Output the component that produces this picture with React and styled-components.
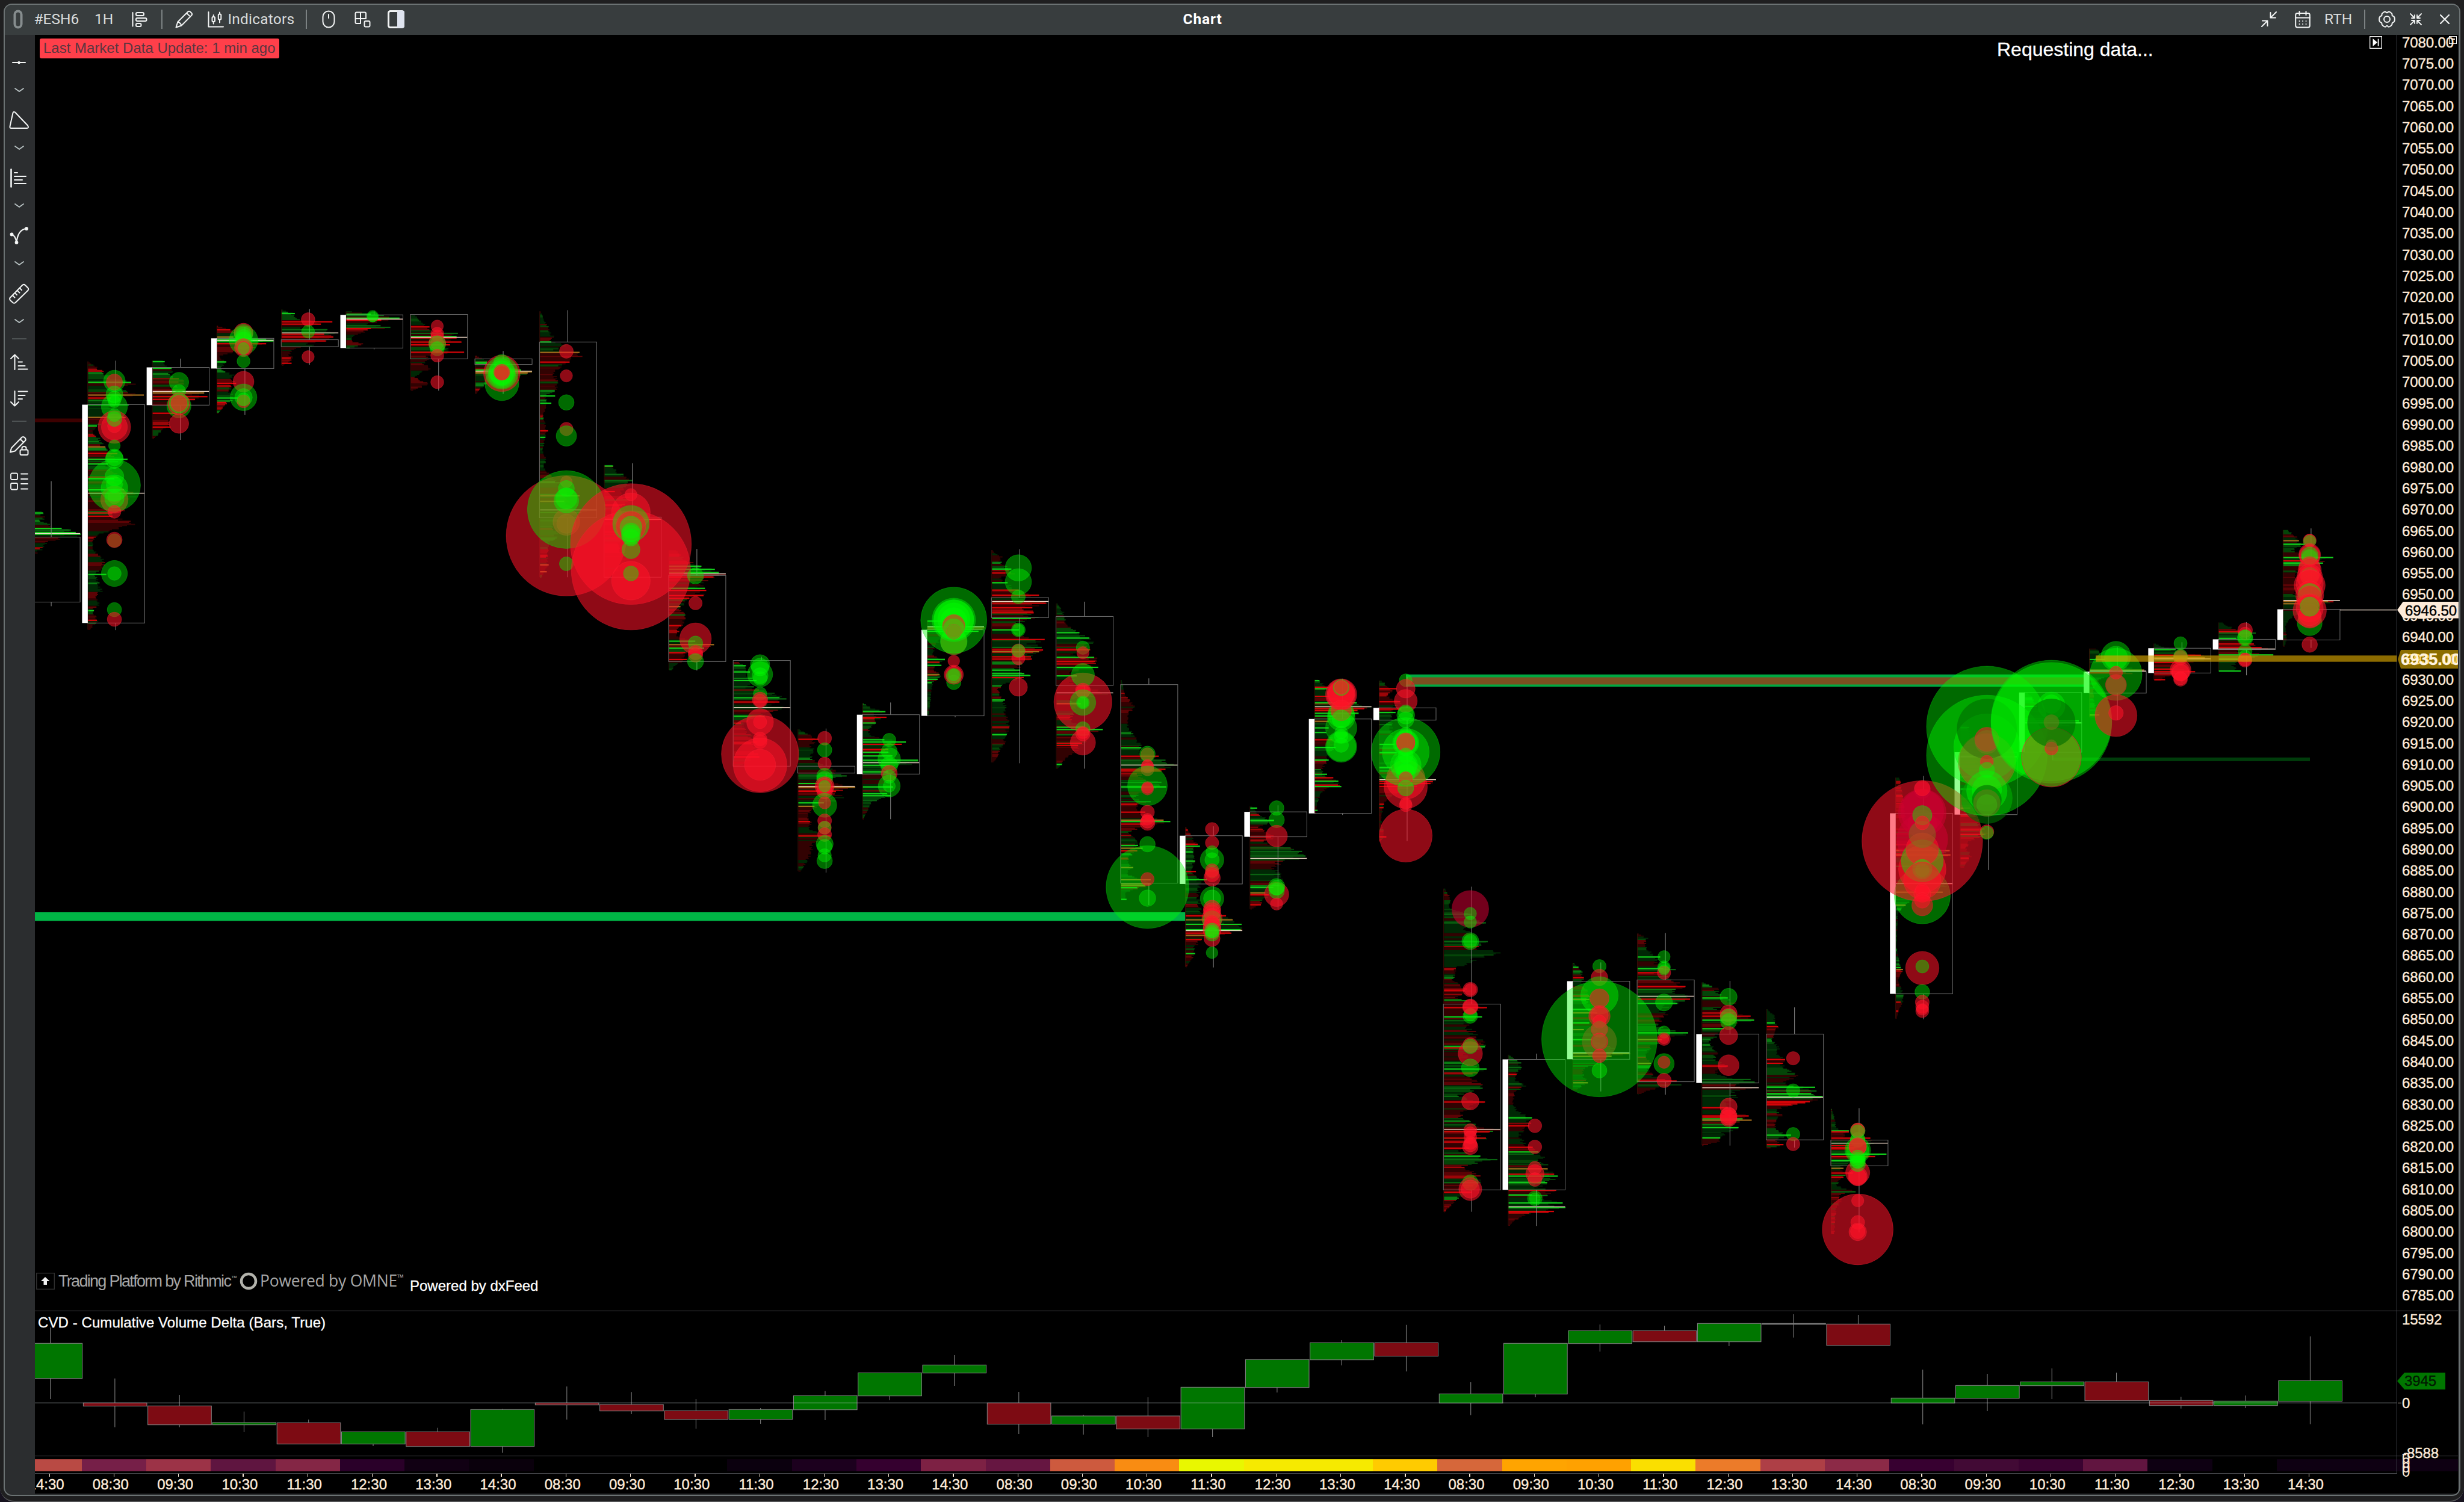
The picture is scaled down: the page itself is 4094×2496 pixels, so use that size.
import React from 'react';
import styled, { createGlobalStyle } from 'styled-components';

const GlobalStyle = createGlobalStyle`
    * { box-sizing: border-box; }
    body {
        margin: 0;
        background: #17131f;
        font-family: "Liberation Sans", Arial, sans-serif;
        overflow: hidden;
    }
    svg { display: block; flex: none; }
`;

const PITCH = 107.28;
const FIRST = 81.6;
const tickX = i => FIRST + i * PITCH;

const hours = ['08:30', '09:30', '10:30', '11:30', '12:30', '13:30', '14:30'];
const times = ['14:30', ...hours, ...hours, ...hours, ...hours, ...hours];
const prices = Array.from({ length: 60 }, (_, i) => (7080 - i * 5).toFixed(2));

// Footprint bars, packed per zone: page y = top + y / sy, page width = w / sx.
// Every token is <y><kind><size>. Lower case g/r/m in `p` is the profile outline,
// `l` holds the bright levels, `c` the large trade bubbles (size = radius).
const ZONES = [
  { top: 480, sy: 2.613, sx: 1.845, bars: [
    { i: 0, wick: [835, 1378], box: [1078, 1360], poc: 1062,
      p: '965g55 980g70 1005g62 1015g90 1025r75 1035r85 1045g150 1060g175 1070g165 1078r120 1095r95 1120r75 1130g60 1150g40',
      l: '973G60 1040G117 1047d145 1058G160 1065G175', c: '' },
    { i: 1, wick: [312, 1482], box: [503, 1451], white: true, poc: 887,
      p: '315g2 350m40 365g55 385g80 405m140 412r150 430m90 460m165 470r70 500g90 530g80 555m115 580r60 595g25 625r15 650g40 685m50 700r60 720r90 740g110 760g60 780m90 820m100 870g120 887r165 905r140 930r100 960r110 985r80 1000r120 1015r150 1040r100 1060g40 1080r20 1120g15 1150g30 1170g45 1190r60 1215r40 1240g25 1280g35 1310g45 1330r30 1365g40 1390r15 1440r30 1480r5',
      l: '406G132 461O171 474R70 503G125 558O115 595G27 686O53 715R90 740G121 760G60 824G80 872G110 973R75 987R75 1240G56 1397G18 1439R27',
      c: '400g33 405r25 458g26 475g22 489g19 512g40 600r50 600r40 595r21 548g20 565g23 681g18 740g28 732g26 915r42 905r20 853g80 815g29 850g25 865g41 910g30 968r20 1093g21 1090r24 1236g40 1236g21 1393g22 1435r22' },
    { i: 2, wick: [303, 656], box: [341, 505], white: true, poc: 445,
      p: '310g35 345g55 380g70 400m110 430r70 445r170 455r155 470r165 480r130 500r120 540r90 570r50 600r50 620g25 650r3',
      l: '316G37 345G58 452O158 468R168 480R130 540R75 600R55',
      c: '405g30 445g21 508g37 500r34 497g30 497r25 585r30' },
    { i: 3, wick: [165, 548], box: [215, 346], white: true, poc: 223,
      p: '160r3 178r60 205g60 215g150 223g173 240r150 260r100 290r5 317g30 345g10 370g50 400r55 440g40 460m50 475g60 495r30 540g3',
      l: '178R40 209O50 218G150 226G173 238R150 317G28 410R58 474G63 493R28',
      c: '223g44 190r29 195g29 200g25 210g24 225g27 247g26 255r28 258r22 258g18 314g20 403r32 471g41 471g27 488r20 480g20' },
    { i: 4, wick: [88, 330], box: [221, 251], poc: 191,
      p: '90g5 105g35 125g45 135r80 142r155 155r120 168g60 178g140 191g173 205r160 213r150 226r135 235g60 245g110 255r50 280r25 300r35 330r5',
      l: '107G40 143R155 153R120 177d140 197R130 209R158 226R135 300R28 323R30',
      c: '133r21 186g20 295r19' },
    { i: 5, wick: [95, 263], box: [113, 257], white: true, poc: 131,
      p: '98g20 108g80 115g115 125g160 131g173 140r110 150g60 160g105 167g135 173r70 190r50 205g20 225g20 240g60 255g10',
      l: '110G75 115d115 127G163 136R107 160d105 167d135 172R75',
      c: '119g18 121g16' },
    { i: 6, wick: [200, 442], box: [111, 304], poc: 210,
      p: '115g15 145g40 165r55 185g60 195g144 208r160 215r140 230r150 240r120 260g110 275r163 290r60 320r45 345r60 380r10 410r60 440r5',
      l: '165R57 193d144 207G140 213R140 231R155 243R120 275R163',
      c: '162r19 195r20 205r19 236r26 236r20 240g26 260g22 290r20 405r20' },
    { i: 7, wick: [270, 456], box: [304, 328], poc: 357,
      p: '290r5 310m40 325g60 340r110 352g140 357m173 370r150 385m80 405g40 430r15 455r3',
      l: '318G35 323G35 352G140 360O173 365O160',
      c: '412g52 367r56 365g50 360g40 372g42 375g35 320g25 385g25 362r25 365r22' },
  ] },
  { top: 500, sy: 1.742, sx: 2.24, bars: [
    { i: 8, wick: [27, 800], box: [119, 628], poc: 605,
      p: '30g3 60g20 75r35 95g45 105r60 115g40 125r110 140g60 148r145 155r170 175r110 200r60 220r60 240r75 260g55 275r20 295g30 330r12 370r25 400g20 430g10 455g25 480g15 500r40 520g70 560m120 590g120 605g200 625g90 650g50 680g70 700g35 730r30 765r30 800r5',
      l: '119G42 149O147 177R110 275G56 296G42 376R30 395G20 564O147 580O90 764O32 784O25',
      c: '146r26 217r23 294g29 371r25 391g38 680r224 640r50 645r36 524r22 604g145 543g30 578g46 572g40 761g26' },
    { i: 9, wick: [470, 800], box: [626, 800], poc: 632,
      p: '475g30 500g60 525g110 550r60 580r110 600r60 632r200 650r90 700r60 750r90 790r40 800r5',
      l: '478G32 502d70 520d105 552R38 632O212',
      c: '704r225 780r222 561r23 612r72 645g68 652r55 655g41 670g35 677g36 685g32 720g34 810r72 789g28' },
    { i: 10, wick: [718, 1070], box: [795, 1044], poc: 790,
      p: '722r30 745r60 755r90 768g120 780g190 790g212 800r160 815r120 832m130 850r125 865r70 885r45 905r60 930r70 945r40 970r30 985g95 995m165 1005g120 1020r60 1040r65 1050g30 1068g8',
      l: '768G120 777G170 786G185 799R165 832G133 838R138 853R128 861R75 885O42 909d60 940R45 985G97 995O167 1005G130 1018R60 1038R66',
      c: '796g30 875r25 978r59 991g27 1018r27 1025r27 1044g30' },
    { i: 11, wick: [1030, 1190], box: [1041, 1347], poc: 1177,
      p: '1045r20 1056g45 1075g50 1100g80 1120g50 1135g170 1150g180 1160r160 1170g130 1177g212 1185r150 1200g90 1225r35 1240r50 1270r80 1300r100 1320r90 1345r20',
      l: '1056G45 1074G60 1099G85 1117d75 1149G170 1152d196 1161R170 1202G115 1222R27 1320R95',
      c: '1052g36 1081g47 1060g33 1085g30 1093g26 1137g25 1155r29 1157r24 1219r50 1219r25 1268r26 1276r26 1312r144 1343r100 1343r58' },
    { i: 12, wick: [1238, 1655], box: [1347, 1367], poc: 1405,
      p: '1240g5 1268r75 1285g50 1300g60 1330r60 1345g100 1365g180 1380g160 1390r90 1405r212 1420r140 1440r170 1455g90 1470r60 1490r35 1510r50 1530g50 1550r110 1570r60 1600r50 1650g10',
      l: '1269R75 1375d180 1397G90 1408O212 1420R140 1453G95 1463O60 1507R44 1549R120',
      c: '1266r26 1300g27 1340r25 1376g30 1385g30 1405r36 1405r30 1418r30 1405g22 1460g45 1453r23 1505r26 1525r25 1525g24 1545r26 1572g32 1580g28 1621g29 1605g25' },
  ] },
  { top: 880, sy: 2.119, sx: 2.24, bars: [
    { i: 13, wick: [609, 1020], box: [652, 861], white: true, poc: 821,
      p: '612g3 628g40 640g85 650r25 662r85 668r45 680g48 700g25 715g25 730g50 745g150 757r140 765g65 775r95 785g110 800g90 812g200 821r212 835g130 855g110 870r130 885r80 905g115 925g85 937g105 950g50 970r30 1000g10 1020r3',
      l: '641G84 661R88 666R44 681G48 740G80 748G160 756R145 774R95 784G95 797G110 812G205 830G100 853G95 906G112 930G90 937G104 954d52',
      c: '741g25 781g30 808g42 830g32 858r30 903g41 903g23 870g25' },
    { i: 14, wick: [340, 661], box: [353, 656], white: true, poc: 342,
      p: '320g60 342g212 350m200 360g160 380m60 410g30 440g20 460g70 475g40 490r25 510m50 525g40 540g20 580g15 650g5',
      l: '322G80 346O212 351O205 358G190 457G65 467R45 478G52 511O45 527G38 539G16',
      c: '395r49 319g123 393g50 318g81 318g75 315g60 322g50 318g74 339r42 352g40 360r28 360g27 463r22 538g27 511r36 511r31 515g28 512g22' },
    { i: 15, wick: [69, 823], box: [240, 310], poc: 253,
      p: '72g3 85g15 95r40 110r30 138g70 152r90 170r30 188g60 213r100 230r170 245g120 253g212 262r200 275r150 293r155 310r170 318g130 335r110 355g90 375r140 388r195 400g160 425r190 440g160 455r150 475r100 495g105 512g145 525r110 540g60 560r25 580g30 610g50 650m60 690m65 722g55 750r50 770g35 800r20 820r3',
      l: '139G72 153R50 187G58 213R100 231R175 259R200 275R150 293R155 313G145 353G100 387R196 415d185 424R190 430O175 448R145 456R148 495G105 507G120 514G143 521R118 600G48 722G55',
      c: '135g49 184g49 237g26 353g26 353g22 453r25 427r26 427g24 555r34' },
    { i: 16, wick: [254, 842], box: [306, 549], poc: 575,
      p: '260g5 300g35 335r40 360g80 382g122 400r140 423g110 440r60 450g150 464r143 485g150 500r60 515g70 540r60 560r150 575r212 595r60 615r90 640m70 680m60 704g170 720g120 735r120 752r100 775r80 800r40 830g15 842r3',
      l: '363G85 382G122 423R125 450G140 464R143 485G155 515G75 613O90 696G105 704G172 722d120 752R95 760R80 827G20',
      c: '607r108 416g25 434r23 512g43 567r28 570r25 609g48 609g24 609g20 702g27 719r27 716r22 750r47' },
    { i: 17, wick: [524, 1322], box: [546, 1245], poc: 829,
      p: '530g3 580r15 620r55 645r30 680g25 700g30 720g50 740g80 768g75 785g80 800r140 815g200 829g212 845r165 860r70 890g150 906g168 918r100 940g60 960r90 980r60 1000r90 1028g180 1040r90 1065r30 1090g60 1112g65 1130r60 1160g25 1190g45 1210g20 1235m100 1255m100 1275g20 1300g15',
      l: '768G75 798R140 812d165 844R165 850R150 890d150 906G168 958d110 967R60 995R90 1023O158 1028G183 1037R90 1112G63 1122O80 1131R60 1190O45 1233O110 1248O110 1254O90 1261G60 1302G20',
      c: '1259g154 792r25 790g29 835r24 830r22 845r24 902g74 913r23 908r22 995r26 1020r22 1033r28 1028r25 1108g29 1231r25 1298g31' },
    { i: 18, wick: [1045, 1542], box: [1078, 1248], white: true, poc: 1412,
      p: '1048r3 1065r15 1090g30 1108r45 1130g30 1165g35 1200g20 1240g60 1280g50 1302g55 1325g55 1345g60 1360r160 1375m180 1390g208 1412m210 1425r160 1440g60 1460r45 1480r30 1500r30 1525g15 1540r3',
      l: '1058R8 1108R45 1115G53 1135G28 1167G35 1204R38 1233G80 1360R150 1374O175 1390G208 1409G205 1421R170 1429O100 1443R60 1493G35',
      c: '1055r25 1103r25 1135g23 1163g44 1163g27 1205g24 1200r25 1215r27 1227r31 1299g44 1299g32 1335r32 1345r33 1350r30 1370r38 1375g35 1365r30 1385r28 1395r33 1410r34 1440r30 1412g28 1425g26 1415g24 1490g22' },
  ] },
  { top: 1080, sy: 1.568, sx: 2.613, bars: [
    { i: 19, wick: [405, 675], box: [422, 487], white: true, poc: 543,
      p: '408g10 425g35 444g105 460r40 487r110 500r60 515g170 530g235 543g247 550r150 565g120 590g140 605g145 620g100 638m90 650r60 664r45 675r3',
      l: '412G30 444G103 487R90 516d175 525d225 537d240 585d130 619G100 633O65 638R80 664R46',
      c: '412g32 443g34 485r47 637r53 617g36 620g33 628g34 662r27' },
    { i: 20, wick: [75, 430], box: [180, 426], white: true, poc: 148,
      p: '78g15 88g40 97r55 103g60 120r65 137g180 148g247 155r200 165g180 180r90 195g60 215g60 235r90 254g90 275g60 292r60 305g35 325g40 333r80 342g100 352r110 360r60 375g25 400g10 425r5',
      l: '80G20 97R60 101G55 121R65 138G182 153R215 158R185 165G190 172G90 186O60 203G60 215G50 234R75 254G90 287G60 324G53 333R80 342G102 352R100 356G115 418G12',
      c: '203g68 252g68 252g64 248g32 225g30 215g28 168g58 175g60 116r68 118r62 112r60 115r55 98g35 97r30 158r45 180g40' },
    { i: 21, wick: [70, 498], box: [151, 183], white: true, poc: 338,
      p: '80g10 101r60 120r40 135r100 150r60 165g60 190g55 215g60 245g80 268g90 290g60 310g50 330g160 338g247 345r235 360r120 380r60 400r20 440r8 487r25 498r3',
      l: '101R75 135R90 154R95 163G70 246G65 268G75 306G55 343R232 348R222 356R100 402R20 411R18 487R30',
      c: '79g28 101r41 133r50 163g33 170g39 182g35 357r94 338r85 266g149 266g102 242g57 242g52 217g27 243r40 240g36 240r40 275g33 300g67 300g52 303g48 320g42 335r30 360g35 405r28 400r26 484r115' },
    { i: 22, wick: [617, 1464], box: [923, 1407], poc: 1249,
      p: '622g5 645r30 670g25 689g120 711g180 725g90 745r140 760g190 775r150 788g243 800g170 815g120 828r50 845g50 860r40 888r120 905r60 923r150 932r187 945r90 956g165 970g110 990g130 1020r175 1034g178 1045r120 1070g90 1092g180 1110g120 1125r160 1142g168 1160g60 1178r180 1200g90 1215g80 1230g120 1249r247 1257r180 1272r180 1290r110 1305g80 1320g160 1328g235 1335g160 1345r80 1370r165 1385g165 1400r110 1413r120 1430r60 1464r3',
      l: '689d120 711d182 760d190 888R90 932R187 956G165 1034G178 1037R100 1092G185 1142d168 1178R178 1255R200 1272R182 1282R110 1298R110 1319G158 1328d232 1388d150 1413R120',
      c: '675m81 687g27 709g27 759g37 759g30 885r32 885r26 954g32 950g28 930r34 930r31 1052r53 1030r33 1033g32 1089g39 1176r38 1252r29 1258r26 1270r28 1285r28 1295r34 1290r30 1388g34 1405r50 1405r40' },
    { i: 23, wick: [1052, 1501], box: [1067, 1407], white: true, poc: 1451,
      p: '1055g5 1075g55 1088g55 1105r35 1120g30 1135g80 1150r30 1180r20 1200g40 1219g100 1240r95 1260g50 1280g70 1296r100 1308g140 1320g155 1335g170 1352m170 1362g195 1372g213 1388g170 1400g140 1408r205 1425g150 1440g230 1451g247 1463r198 1470r80 1485r30 1500r3',
      l: '1076d55 1088d57 1106R35 1131d57 1219G102 1240R90 1296R105 1308G130 1352O170 1366R198 1371G214 1388G168 1408R207 1420G100 1441G235 1453G247 1463R197 1467R90',
      c: '1240r30 1295r30 1365r40 1350r29 1380r30 1429g32 1429g24' },
  ] },
  { top: 1480, sy: 2.412, sx: 2.24, bars: [
    { i: 24, wick: [288, 805], box: [363, 676], white: true, poc: 650,
      p: '290g5 307g18 325g35 345r40 365g40 400g60 450g60 490g100 520m80 560g90 600g100 630g160 650m205 665m140 690m110 710g50 740g40 765m55 800m15',
      l: '307G20 349R40 436O60 476G80 490O90 530G60 557O40 597G70 653O212 664O143 770O55',
      c: '303g25 348r31 595g215 420g70 432r36 605e65 503r40 500r33 525r25 555r31 555e30 605r32 605e28 662r26 721g28' },
    { i: 25, wick: [170, 818], box: [358, 766], poc: 423,
      p: '172g5 190g40 205r30 235g40 266g85 290r70 315g140 330r80 350g140 368r195 385r178 400g130 415g190 423g212 435r195 452g148 470g100 500r110 520r85 545g90 570g188 582r165 598r105 620g60 645g40 670g40 692m55 710g40 740r60 763r145 775g165 785r100 800r40 815r3',
      l: '266G84 313G95 316d142 329R80 384R178 435R195 452G148 570G188 597O90 692O50 763R145',
      c: '265g23 307g24 310g22 329r25 318g20 448g32 567g23 595r24 595r18 694g38 688r23 761r27' },
    { i: 26, wick: [362, 1022], box: [575, 771], white: true, poc: 790,
      p: '368g5 390r60 410g60 430g95 450r130 470g50 503r180 519g193 535r100 555g80 580r60 600g30 620g40 645g60 675g50 703r95 720r60 740g70 757g180 770g195 780r110 790g212 800g130 820g140 850g100 870r95 885g130 903r173 920r184 935g110 950g135 970g90 990g68 1005r65 1020r3',
      l: '430G95 503R180 519G193 553G80 703R95 757d180 767d195 870R95 903R173 908R120 915G150 920O184 950G135 991G67',
      c: '426g32 492r32 505r31 508g31 525g30 581r34 700r39 866r32 900r30 913r31 905r32' },
    { i: 27, wick: [468, 1030], box: [575, 999], poc: 828,
      p: '475g3 500g30 530g30 545r45 575r30 600g20 625g50 650g40 677r68 692r60 715g90 740g115 755r95 775g70 788g180 805g185 815g165 828g212 840r170 850r140 862r80 880g35 900r60 930r30 960g40 980g90 990g45 1005r40 1018r65 1030r10',
      l: '530G30 545R42 677R68 692R60 788G180 803d185 814G165 825G208 846R160 850R143 858R90 980G90 1018R62',
      c: '672r25 801g25 976g25 1016r25' },
    { i: 28, wick: [872, 1370], box: [1000, 1103], poc: 1012,
      p: '875g2 920g15 950g20 965m60 985r50 993r120 1012g205 1022r110 1040g90 1056g200 1066r160 1080g90 1100g50 1115g30 1132r80 1150r35 1180g20 1205g95 1215r40 1250r35 1270r20 1320r15 1375r12',
      l: '963G65 967R65 992R145 1022R80 1030R90 1035R85 1056G205 1066R163 1083G75 1113O45 1132R80 1149R45 1207d90',
      c: '998g27 1000g28 962g28 962r27 958r25 965g25 1130r45 1145r36 1148r32 1040g48 1042g42 1025r33 1028r32 1070g28 1080g29 1095g29 1085g27 1358r132 1243r23 1330r26 1368r33 1366r27' },
  ] },
  { top: 860, sy: 1.823, sx: 1.546, bars: [
    { i: 29, wick: [783, 1520], box: [896, 1443], white: true, poc: 1109,
      p: '788g8 810r15 850r20 900r25 930r30 960r80 990r60 1010m120 1022m130 1050m60 1080r60 1109m140 1135m110 1150m60 1175g25 1200g5 1300g2 1362g12 1375r18 1400r5 1440g20 1455g20 1475r15 1500r5 1518r2',
      l: '1009O138 1022O140 1135O120 1174O25 1363G12 1369O18 1468R12 1495R6',
      c: '1146g72 980r155 975m66 895m62 890m56 826m22 820r20 930m38 1065r61 1040g54 1005r42 960e35 902g25 925r18 1065g25 1068g18 1100r48 1140r22 1130r18 1160r20 1175r27 1365r43 1360g17 1437g19 1468r18 1482r17 1495r17 1490r15' },
    { i: 30, wick: [711, 1068], box: [711, 900], white: true, poc: 725,
      p: '630g20 660g30 700g40 760g50 790m40 820g50 860m60 890r45 915r50 935r55 955r70 980r25 1000r15 1020r30 1060r10',
      l: '636G22 880O25 960R60',
      c: '850d66 633g155 740r74 721g155 695g85 640d77 738e71 672r31 680e31 740r17 765g20 828g52 825g38 855d38 870g26 865e35 952r18 955g17' },
    { i: 31, wick: [530, 735], box: [530, 711], white: true, poc: 622,
      p: '532g10 560g30 572g35 600g60 622g120 640g90 690g20',
      l: '572G30 616G138 622G146',
      c: '622g155 615g155 726r77 726g75 565g24 570g35 622d62 620e20 700r17 690e15' },
    { i: 32, wick: [393, 614], box: [467, 532], white: true, poc: 465,
      p: '397g20 410g30 430g60 450m90 465m146 475g80 490g25 520r10 560g12 590m25 605m20',
      l: '430G40 462O140 470R50 598O25',
      c: '420g38 475g67 425g30 600r54 592r19 507r27 507e26 470r17' },
    { i: 33, wick: [378, 500], box: [396, 471], white: true, poc: 428,
      p: '382g5 400g50 416r120 428m146 440r80 455g70 468r105 480r30 492r20',
      l: '400G55 417R120 425O130 439R60 459R50 467R105 491R28',
      c: '381g17 425r18 420r17 420g18 462r27 466r24 470r22 490r18 487r17' },
    { i: 34, wick: [317, 478], box: [369, 400], white: true, poc: 398,
      p: '318g10 345r60 355g55 366g80 375r70 390r100 398r146 405r50 415g135 425g70 445g40 465g55',
      l: '346R55 350d95 366G45 383R90 394R110 416G140 429G50 465G57',
      c: '341r19 352r17 362g19 365g20 405g18 420g16 432r18 430r17' },
    { i: 35, wick: [33, 395], box: [278, 371], white: true, poc: 251,
      p: '38g15 55g35 71m40 82g60 100g20 121g125 138g100 150m50 175r30 190r40 215r40 235m30 251r140 257m115 275m50 290g45 310g15 330g5 365g10 390r3',
      l: '70O40 81G55 121G128 131R90 138G102 254O115 261O60',
      c: '320g32 70r17 68r15 72g16 112r28 115r27 115g22 120g20 150r27 160r30 175r25 178g23 180r33 205r40 200r35 235r36 225r28 235g30 245r32 282r43 275r35 300r30 295r28 268r22 270g25 385r20' },
  ] },
];

const parse = text => [...text.matchAll(/(\d+)([a-zA-Z])(\d+)/g)].map(m => [Number(m[1]), m[2], Number(m[3])]);

const SHADES = {
  g: ['#002805', '#044508', '#0a7a12'],
  r: ['#320202', '#5c0305', '#9c0508'],
};
const BRIGHT = { G: '#12cc1c', R: '#d60408', O: '#a06c1c', d: '#0a6412' };
const BUBBLES = {
  g: 'rgba(0,252,0,0.42)',
  r: 'rgba(255,18,40,0.56)',
  m: 'rgba(205,0,50,0.56)',
  d: 'rgba(0,110,0,0.62)',
  e: 'rgba(120,120,25,0.5)',
};

const random = seed => {
  let s = seed * 7919 + 17;
  return () => {
    s = (s * 1103515245 + 12345) % 2147483648;
    return s / 2147483648;
  };
};

const bar = (x, y, w, h) => `M${x.toFixed(1)} ${y.toFixed(1)}h${w.toFixed(1)}v${h}h${(-w).toFixed(1)}z`;

// Walks the outline one price level at a time and sorts the rows by shade.
const buildProfile = (item, zone) => {
  const pts = parse(item.p);
  const rnd = random(item.i + 3);
  const x = tickX(item.i) - 42.5;
  const paths = {};
  let run = 0;
  let tone = 'g';
  let level = 0;
  const step = 1.765 * zone.sy;
  let k = 0;
  for (let y = pts[0][0]; y < pts[pts.length - 1][0]; y += step) {
    while (k < pts.length - 2 && pts[k + 1][0] <= y) k += 1;
    const [y0, c0, w0] = pts[k];
    const [y1, c1, w1] = pts[k + 1];
    const t = (y - y0) / (y1 - y0);
    if (run <= 0) {
      const near = t < 0.5 ? c0 : c1;
      const bias = near === 'g' ? 0.83 : near === 'r' ? 0.15 : 0.5;
      tone = rnd() < bias ? 'g' : 'r';
      const l = rnd();
      level = l < 0.66 ? 0 : l < 0.94 ? 1 : 2;
      run = 1 + Math.floor(rnd() * 2.4);
    }
    run -= 1;
    const w = (w0 + (w1 - w0) * t) * (0.72 + rnd() * 0.33) / zone.sx;
    const fill = SHADES[tone][level];
    paths[fill] = (paths[fill] || '') + bar(x, zone.top + y / zone.sy, Math.min(Math.max(w, 1), 94), 1.8);
  }
  return paths;
};

const Footprint = ({ item, zone }) => {
  const x = tickX(item.i);
  const py = v => zone.top + v / zone.sy;
  const paths = buildProfile(item, zone);
  const [boxTop, boxBottom] = item.box.map(py);
  const [wickTop, wickBottom] = item.wick.map(py);
  const ends = parse(item.p);
  return (
    <g>
      <rect x={x - 43.5} y={py(ends[0][0])} width="1" height={(ends[ends.length - 1][0] - ends[0][0]) / zone.sy} fill="#3c1008" />
      {Object.keys(paths).map(fill => <path key={fill} d={paths[fill]} fill={fill} />)}
      {parse(item.l).map(([y, kind, w], n) => (
        <rect key={n} x={x - 42.5} y={py(y) - 1} width={w / zone.sx} height="2.2" fill={BRIGHT[kind]} />
      ))}
      <rect x={x - 42.5} y={py(item.poc) - 0.6} width="94" height="1.4" fill="#f3dccb" />
      <path d={`M${x + 3.5} ${wickTop}V${Math.max(boxTop, wickTop)}M${x + 3.5} ${boxBottom}V${Math.max(wickBottom, boxBottom)}`} stroke="#8c8c8c" strokeWidth="1" />
      <rect x={x - 43.5} y={boxTop} width="95" height={boxBottom - boxTop} fill="none" stroke="#6f6f6f" strokeWidth="1" />
      {item.white && <rect x={x - 52.5} y={boxTop} width="9.4" height={boxBottom - boxTop} fill="#fff" />}
    </g>
  );
};

const Bubbles = ({ item, zone }) => (
  <g>
    {parse(item.c).map(([y, kind, r], n) => (
      <circle key={n} cx={tickX(item.i) + 1.2} cy={zone.top + y / zone.sy} r={r / zone.sx}
        fill={BUBBLES[kind]} stroke={kind === 'g' ? 'rgba(0,235,20,0.3)' : kind === 'r' ? 'rgba(255,40,60,0.3)' : 'none'} strokeWidth="1" />
    ))}
  </g>
);

const each = render => ZONES.flatMap(zone => zone.bars.map(item => render(item, zone)));

const PriceChart = () => (
  <svg width="3924" height="2120" viewBox="58 58 3924 2120">
    <rect x="58" y="695.5" width="79" height="6" fill="#3d0000" />
    <rect x="58" y="1516" width="1912" height="14.3" fill="#00b445" />
    <rect x="2336" y="1120.8" width="1136" height="20.4" fill="#00a843" />
    <rect x="2336" y="1125.5" width="1136" height="12" fill="#7a4f20" />
    <rect x="3410" y="1258.8" width="428" height="6" fill="#003c0b" />
    {each((item, zone) => <Footprint key={item.i} item={item} zone={zone} />)}
    {each((item, zone) => <Bubbles key={item.i} item={item} zone={zone} />)}
    <rect x="3482" y="1089.3" width="500" height="10.4" fill="rgba(215,165,0,0.65)" />
    <rect x="3888" y="1013" width="94" height="1.3" fill="#fdebd9" />
  </svg>
);

// [upper edge, lower edge, wick top, wick bottom, direction]
const cvd = [
  [2232.3, 2290.7, 2206, 2325, 1], [2331.3, 2336.7, 2290.7, 2371.7, -1], [2336.3, 2367.7, 2318, 2371.7, -1],
  [2364, 2367.7, 2345.7, 2380, 1], [2364.3, 2399.7, 2359, 2400, -1], [2379.3, 2399.7, 2379, 2403, 1],
  [2379.3, 2403.7, 2372.7, 2404, -1], [2342.3, 2403.7, 2341, 2414, 1], [2331.3, 2334.7, 2304, 2359, -1],
  [2334, 2344.7, 2313.3, 2350, -1], [2344.3, 2358.7, 2325, 2374.3, -1], [2342.3, 2358.7, 2340, 2366, 1],
  [2319.3, 2342.7, 2311.7, 2360, 1], [2281.3, 2319.7, 2281, 2326.7, 1], [2268.3, 2281.7, 2252, 2303, 1],
  [2331.3, 2366.7, 2313, 2383, -1], [2353, 2366.7, 2351, 2384, 1], [2353, 2374.7, 2322, 2388, -1],
  [2305.3, 2374.7, 2305, 2388, 1], [2259.3, 2305.7, 2259, 2314, 1], [2231.3, 2259.7, 2227, 2269, 1],
  [2231.3, 2253.7, 2201.7, 2279, -1], [2316.3, 2331.7, 2297, 2351.7, 1], [2232.3, 2316.7, 2232, 2322, 1],
  [2211.3, 2232.7, 2201, 2246, 1], [2211.3, 2229.7, 2203, 2230, -1], [2199.3, 2229.7, 2199, 2237, 1],
  [2199.3, 2200.7, 2184, 2222.7, 0], [2200.3, 2235.7, 2185, 2236, -1], [2323.3, 2331.7, 2276, 2367, 1],
  [2302.3, 2323.7, 2283, 2345, 1], [2296.3, 2302.7, 2274, 2325, 1], [2296.3, 2327.7, 2281, 2328, -1],
  [2327.3, 2335.7, 2321, 2340.7, -1], [2328.3, 2335.7, 2319, 2340, 1], [2294.3, 2328.7, 2220.7, 2366.7, 1],
];
const cvdFill = { '1': '#007600', '-1': '#7d0b13', '0': '#888' };

const CvdChart = () => (
  <svg width="3924" height="240" viewBox="58 2179 3924 240">
    {cvd.map(([a, b, top, bottom, dir], i) => (
      <g key={i}>
        <path d={`M${tickX(i) + 2} ${top}V${a}M${tickX(i) + 2} ${b}V${bottom}`} stroke="#8a8a8a" strokeWidth="1" />
        <rect x={tickX(i) - 50.5} y={a} width="105.6" height={b - a} fill={cvdFill[dir]} stroke="#868686" strokeWidth="1" />
      </g>
    ))}
    <rect x="58" y="2330.8" width="3924" height="1.1" fill="rgba(190,198,205,0.65)" />
  </svg>
);

const heat = ['#b94a44', '#761f48', '#9c3347', '#5f1540', '#842645', '#2a0029', '#110013', '#0a000c', '#000', '#000', '#000',
  '#0b000e', '#1c001e', '#35002f', '#7d2144', '#661641', '#cd5a3e', '#f98c12', '#e9f700', '#f6ea00', '#f6ea00', '#ffcb00',
  '#d6673a', '#ffa400', '#ffa100', '#fadf00', '#ec7b29', '#ae3f46', '#8c2a47', '#370030', '#420a35', '#3a0331', '#611540',
  '#0e0012', '#000', '#0e0012'];

const Icon = ({ w, h, sw = 2, children }) => (
  <svg width={w} height={h} viewBox={`0 0 ${w} ${h}`} fill="none" stroke="#f2f4f4" strokeWidth={sw} strokeLinecap="round" strokeLinejoin="round">
    {children}
  </svg>
);

const Chevron = () => (
  <Icon w={16} h={16} sw={1.8}><path d="M1 5l7 5 7-5" stroke="#b9c3c4" /></Icon>
);

export default function App() {
  return (
    <Desktop>
      <GlobalStyle />
      <Window>
        <Header>
          <Slot $ml={14}><Icon w={16} h={32} sw={4}><rect x="2.5" y="2.5" width="11" height="27" rx="5.5" stroke="#868d8e" /></Icon></Slot>
          <Label $ml={18.5} $w={78}>#ESH6</Label>
          <Label $ml={22.5} $w={29.5}>1H</Label>
          <Slot $ml={32.5}>
            <Icon w={26} h={26}>
              <path d="M1.500 2v22.500" />
              <rect x="7" y="2" width="13" height="5" rx="2" />
              <rect x="7" y="11" width="17.500" height="5" rx="2" />
              <rect x="7" y="20" width="8.500" height="5" rx="2" />
            </Icon>
          </Slot>
          <Divider $ml={22.5} />
          <Slot $ml={21}>
            <Icon w={30} h={30}><path d="M1.500 28.500l2.800-9L21 2.700q1.700-1.700 3.600-.6l2.800 2.700q1.500 1.800 0 3.600L10.500 25.500zM19 4.700l6.300 6.200M4.300 19.500q4.500 1 6.200 6" /></Icon>
          </Slot>
          <Slot $ml={24}>
            <Icon w={27} h={27}>
              <path d="M1.500 1v24.500H26" />
              <rect x="7.500" y="9" width="4.500" height="8" rx="1.500" /><path d="M9.700 6v3M9.700 17v3.500" />
              <rect x="17.800" y="4.500" width="4.500" height="9" rx="1.500" /><path d="M20 1.500v3M20 13.500v5" />
            </Icon>
          </Slot>
          <Label $ml={7} $w={112} $ls={0.2}>Indicators</Label>
          <Divider $ml={17} />
          <Slot $ml={25}><Icon w={22} h={30}><rect x="1.500" y="1.500" width="19" height="27" rx="9.500" /><path d="M11 7v6" /></Icon></Slot>
          <Slot $ml={32}>
            <Icon w={27} h={27}>
              <path d="M3 1.500h14q2 0 2 2V12H1.500V3.500q0-2 2-2zM1.500 12v6q0 2 2 2H10V1.500" />
              <rect x="16.500" y="16" width="9" height="9.500" rx="2" />
            </Icon>
          </Slot>
          <Slot $ml={28}>
            <Icon w={28} h={30}><rect x="1.500" y="1.500" width="25" height="27" rx="3" strokeWidth="3" /><path d="M17 1.500h8q2 0 2 2v23q0 2-2 2h-8z" fill="#dfe4ef" stroke="#dfe4ef" /></Icon>
          </Slot>
          <Title>Chart</Title>
          <Controls>
            <Slot><Icon w={26} h={26}><path d="M25 1L15.500 10.500M15.500 2v8.500H24M1 25l9.500-9.500M2 15.500h8.500V24" /></Icon></Slot>
            <Slot $ml={30}>
              <Icon w={26} h={29}>
                <rect x="1.200" y="4" width="23.600" height="23.500" rx="3" />
                <path d="M1.200 11.500h23.600M7.500 1v6M18.500 1v6" />
                <path d="M7.500 17h.1M13 17h.1M18.500 17h.1M7.500 22h.1M13 22h.1M18.500 22h.1" />
              </Icon>
            </Slot>
            <Label $ml={23} $w={50}>RTH</Label>
            <Divider $ml={16} />
            <Slot $ml={22}>
              <Icon w={28} h={28}>
                <circle cx="14" cy="14" r="5" />
                <path d="M9 2q2.500-1.500 4 .8 1 1 2 0Q16.500.5 19 2l2 1.500Q23 5 22.500 7q0 1.500 2 1.800 2.500 1.200 2.300 5.200.2 4-2.300 5.200-2 .3-2 1.800.5 2-1.500 3.500L19 26q-2.500 1.500-4-.8-1-1-2 0-1.500 2.300-4 .8l-2-1.500Q5 23 5.500 21q0-1.500-2-1.800Q1 18 1.200 14 1 10 3.500 8.800q2-.3 2-1.800Q5 5 7 3.500z" />
              </Icon>
            </Slot>
            <Slot $ml={24}>
              <Icon w={20} h={20} sw={1.8}><path d="M1 1l7 7M8 3v5H3M19 1l-7 7M12 3v5h5M1 19l7-7M8 17v-5H3M19 19l-7-7M12 17v-5h5" /></Icon>
            </Slot>
            <Slot $ml={30}><Icon w={16} h={16} sw={2.2}><path d="M1 1l14 14M15 1L1 15" /></Icon></Slot>
          </Controls>
        </Header>
        <Body>
          <Sidebar>
            <Tool><Icon w={30} h={10} sw={2}><path d="M4 5h21" /><circle cx="14.500" cy="5" r="1.200" fill="#fff" /></Icon></Tool>
            <Tool $lift><Chevron /></Tool>
            <Tool><Icon w={34} h={32}><path d="M6.500 3.500Q7.500 1 10 2.500L31 24.500q2.500 4-1 4.500H3.500Q1 29 1.500 26z" /></Icon></Tool>
            <Tool $lift><Chevron /></Tool>
            <Tool><Icon w={32} h={32}><path d="M2.500 1.500v29" strokeWidth="2.600" /><path d="M8 7h5M8 13h19M8 19h13M8 25h19" /></Icon></Tool>
            <Tool $lift><Chevron /></Tool>
            <Tool>
              <Icon w={32} h={32} sw={2.2}>
                <path d="M3 13.500q6 1 8.500 13Q14 5 28 4" />
                <circle cx="3.500" cy="13.500" r="1.800" fill="#fff" /><circle cx="11.500" cy="27" r="1.800" fill="#fff" /><circle cx="28" cy="4" r="1.800" fill="#fff" />
              </Icon>
            </Tool>
            <Tool $lift><Chevron /></Tool>
            <Tool>
              <Icon w={34} h={34}>
                <path d="M1.500 24L22.500 2.500q2.500-1.500 4.500.5l4.500 4.500q1.500 2 0 4L10.500 32q-2 1.500-4 0L2 28q-1.500-2-.5-4z" />
                <path d="M6 20l3.500 3.500M10 16l3 3M14 12l3.500 3.500M18 8l3 3" />
              </Icon>
            </Tool>
            <Tool $lift><Chevron /></Tool>
            <Tool $h={5}><Rule /></Tool>
            <Tool $h={74}><Icon w={32} h={28}><path d="M8.500 26V2M2 8l6.500-6.500L15 8M14.500 13.500H21M14.500 20h11M14.500 25.500h15" /></Icon></Tool>
            <Tool $h={46}><Icon w={32} h={28}><path d="M8.500 2v24M2 20l6.500 6.500L15 20M14.500 2.500h15M14.500 9h11M14.500 15H21" /></Icon></Tool>
            <Tool $h={30}><Rule /></Tool>
            <Tool $h={52}>
              <Icon w={34} h={34}>
                <path d="M2 27.500l2-7L21.500 2.500q2-1.200 4 .3l1.500 1.500q1.500 2 0 4L10 25.500zM18.500 5.500l5.500 5.500" />
                <rect x="18.500" y="23.500" width="13" height="8.500" rx="2" /><path d="M21.500 23v-2.500q0-2.500 3.500-2.500t3.500 2.500V23" />
              </Icon>
            </Tool>
            <Tool $h={66}>
              <Icon w={32} h={30} sw={1.8}>
                <rect x="2" y="1.500" width="11" height="10.500" rx="2" /><rect x="2" y="18" width="11" height="10.500" rx="2" />
                <path d="M19 2.500h11M19 11h11M19 19h11M19 27.500h11" />
              </Icon>
            </Tool>
          </Sidebar>
          <Panels>
            <Panel $h={2120}>
              <Plot>
                <PriceChart />
                <Stale>Last Market Data Update: 1 min ago</Stale>
                <Status>Requesting data...</Status>
                <JumpButton>
                  <svg width="21" height="21" viewBox="0 0 21 21"><rect x=".7" y=".7" width="19.600" height="19.600" fill="none" stroke="#fff" strokeWidth="1.300" /><path d="M5.500 4v13l7.500-6.500z" fill="#fff" /><path d="M14.600 4.500v12" stroke="#fff" strokeWidth="1.800" /></svg>
                </JumpButton>
                <Credits>
                  <svg width="31" height="28" viewBox="0 0 31 28"><rect x=".7" y=".7" width="29.600" height="26.600" fill="none" stroke="#303030" strokeWidth="1.400" /><path d="M15 7l7.500 7H18v6h-5.500v-6H8z" fill="#f2f2f2" /></svg>
                  <Rithmic>Trading Platform by Rithmic</Rithmic>
                  <Mark>™</Mark>
                  <svg width="30" height="30" viewBox="0 0 30 30"><circle cx="15" cy="15" r="12" fill="none" stroke="#b3b3ac" strokeWidth="4.500" /></svg>
                  <Omne>Powered by OMNE<sup>™</sup></Omne>
                  <Feed>Powered by dxFeed</Feed>
                </Credits>
              </Plot>
              <Axis>
                <PriceList>
                  {prices.map(p => <Price key={p}>{p}</Price>)}
                </PriceList>
                <Corner />
                <LastPrice>6946.50</LastPrice>
                <LevelTag><span>6935.00</span><b>6935.00</b></LevelTag>
              </Axis>
            </Panel>
            <Panel $h={241} $line>
              <Plot>
                <CvdChart />
                <StudyName>CVD - Cumulative Volume Delta (Bars, True)</StudyName>
              </Plot>
              <Axis>
                <CvdValue>15592</CvdValue>
                <CvdValue $mt={110.5} $tick>0</CvdValue>
                <CvdValue $mt={55.7}>-8588</CvdValue>
                <DeltaTag>3945</DeltaTag>
              </Axis>
            </Panel>
            <Panel $h={29} $line>
              <HeatRow>
                {heat.map((color, i) => <HeatCell key={i} $color={color} $first={i === 0} $last={i === heat.length - 1} />)}
              </HeatRow>
              <HeatAxis>
                {[-10, -2, 6, 13].map(top => <Zero key={top} $top={top}>0</Zero>)}
              </HeatAxis>
            </Panel>
            <TimeAxis>
              {times.map((t, i) => <Time key={i}>{t}</Time>)}
            </TimeAxis>
          </Panels>
        </Body>
      </Window>
    </Desktop>
  );
}

const Desktop = styled.div`
    width: 4094px;
    height: 2496px;
    padding: 6px 6px 8px;
    background: #1f1f20;
    border-bottom: 2px solid #515254;
    border-radius: 0 0 24px 24px;
`;

const Window = styled.div`
    display: flex;
    flex-direction: column;
    height: 2480px;
    border: 2px solid #6b7273;
    border-radius: 14px;
    overflow: hidden;
    background: #2b2d2f;
`;

const Header = styled.header`
    display: flex;
    align-items: center;
    height: 50px;
    padding-bottom: 2px;
    flex: none;
    background: #383d3e;
    color: #d9dcdc;
    font-family: Roboto, "Liberation Sans", sans-serif;
    font-size: 24.5px;
    white-space: nowrap;
`;

const Slot = styled.div`
    flex: none;
    margin-left: ${p => p.$ml || 0}px;
`;

const Label = styled.span`
    flex: none;
    width: ${p => p.$w}px;
    margin-left: ${p => p.$ml}px;
    margin-top: -2px;
    letter-spacing: ${p => p.$ls || 0}px;
`;

const Divider = styled.i`
    flex: none;
    width: 2px;
    height: 32px;
    margin-left: ${p => p.$ml}px;
    background: #7c8283;
`;

const Title = styled.strong`
    margin: -2px 0 0 1294px;
    color: #fff;
    letter-spacing: .9px;
`;

const Controls = styled.div`
    display: flex;
    align-items: center;
    margin-left: auto;
    padding-right: 16px;
`;

const Body = styled.div`
    display: flex;
    flex: 1;
    padding: 0 2px 2px 0;
`;

const Sidebar = styled.nav`
    flex: none;
    width: 50px;
    padding: 22px 2px 0 0;
`;

const Tool = styled.div`
    display: flex;
    align-items: center;
    justify-content: center;
    height: ${p => p.$h || 48}px;
    padding-bottom: ${p => p.$lift ? 4 : 0}px;
`;

const Rule = styled.i`
    width: 24px;
    height: 2px;
    background: #4d5253;
`;

const Panels = styled.main`
    display: flex;
    flex-direction: column;
    width: 4026px;
    background: #000;
`;

const Panel = styled.section`
    position: relative;
    display: flex;
    flex: none;
    height: ${p => p.$h}px;
    border-top: ${p => p.$line ? '1.500px solid #4a4c50' : 'none'};
`;

const Plot = styled.div`
    position: relative;
    width: 3924px;
    overflow: hidden;
`;

const Axis = styled.aside`
    position: relative;
    width: 102px;
    padding-left: 8px;
    border-left: 1px solid #43444e;
    color: #fdebd9;
    font-size: 24px;
    letter-spacing: -.1px;
    -webkit-text-stroke: .4px;
`;

const Stale = styled.div`
    position: absolute;
    left: 8px;
    top: 6px;
    width: 398px;
    height: 33px;
    padding-left: 6px;
    border-radius: 3px;
    background: #ff3f4a;
    color: #5a3640;
    font-size: 24px;
    line-height: 32px;
    white-space: nowrap;
`;

const Status = styled.div`
    position: absolute;
    left: 3260px;
    top: 6px;
    color: #fff;
    font-size: 32px;
    -webkit-text-stroke: .3px;
`;

const JumpButton = styled.div`
    position: absolute;
    left: 3879px;
    top: 2px;
`;

const Credits = styled.div`
    position: absolute;
    left: 2px;
    top: 2055px;
    display: flex;
    align-items: center;
    height: 32px;
    color: #a6a6a6;
    white-space: nowrap;
`;

const Rithmic = styled.span`
    width: 287px;
    margin-left: 6px;
    font-size: 27px;
    letter-spacing: -1.7px;
`;

const Mark = styled.span`
    width: 14px;
    margin-top: -12px;
    font-size: 10px;
`;

const Omne = styled.span`
    width: 243px;
    margin: -3px 0 0 4px;
    font-family: "Open Sans", sans-serif;
    font-size: 26.5px;
    letter-spacing: -.25px;
    sup { font-size: 15px; vertical-align: 9px; line-height: 0; }
`;

const Feed = styled.span`
    margin: 16px 0 0 6px;
    color: #fff;
    font-size: 24px;
    -webkit-text-stroke: .3px;
`;

const PriceList = styled.div`
    margin-top: -5.3px;
`;

const Price = styled.div`
    height: 35.3px;
    line-height: 36px;
`;

const Corner = styled.i`
    position: absolute;
    right: 2px;
    top: 2px;
    width: 13px;
    height: 13px;
    border: 1.300px solid #fff;
    &::after {
        content: '';
        position: absolute;
        left: 3px;
        top: 3px;
        width: 6px;
        height: 2px;
        background: #fdebd9;
    }
`;

const LastPrice = styled.div`
    position: absolute;
    left: 0;
    top: 941.500px;
    width: 102px;
    height: 28px;
    padding-left: 13px;
    background: #fdebd9;
    clip-path: polygon(0 50%, 10px 0, 100% 0, 100% 100%, 10px 100%);
    color: #000;
    line-height: 29px;
`;

const LevelTag = styled.div`
    position: absolute;
    left: 1px;
    top: 1022px;
    width: 100px;
    height: 31px;
    overflow: hidden;
    background: #8c6d00;
    clip-path: polygon(0 50%, 5px 0, 100% 0, 100% 100%, 5px 100%);
    line-height: 31px;
    span { position: absolute; left: 13px; color: #ffd75e; }
    b { position: absolute; left: 5px; color: #fff3df; font-size: 27.5px; letter-spacing: 0; }
`;

const CvdValue = styled.div`
    position: relative;
    height: 28px;
    margin-top: ${p => p.$mt || 0}px;
    line-height: 28px;
    &::before {
        content: '';
        position: absolute;
        display: ${p => p.$tick ? 'block' : 'none'};
        left: -7px;
        top: 13px;
        width: 6px;
        height: 1.500px;
        background: #fdebd9;
    }
`;

const DeltaTag = styled.div`
    position: absolute;
    left: 0;
    top: 102px;
    width: 80px;
    height: 28px;
    padding-left: 12px;
    background: #007600;
    clip-path: polygon(0 50%, 12px 0, 100% 0, 100% 100%, 12px 100%);
    color: #001a00;
    line-height: 27px;
`;

const StudyName = styled.div`
    position: absolute;
    left: 5px;
    top: 5px;
    color: #fff;
    font-size: 24px;
    letter-spacing: .08px;
    -webkit-text-stroke: .3px;
`;

const HeatRow = styled.div`
    display: flex;
    width: 4026px;
    height: 20px;
    margin-top: 4.500px;
`;

const HeatCell = styled.i`
    flex: ${p => p.$last ? '1 0 0' : p.$first ? '0 0 77.8px' : `0 0 ${PITCH}px`};
    background: ${p => p.$color};
`;

const HeatAxis = styled.div`
    position: absolute;
    left: 3924px;
    top: -1px;
    width: 102px;
    height: 29px;
    border-left: 1px solid #43444e;
`;

const Zero = styled.span`
    position: absolute;
    left: 8px;
    top: ${p => p.$top}px;
    color: #fdebd9;
    font-size: 24px;
    line-height: 28px;
`;

const TimeAxis = styled.footer`
    display: flex;
    width: 3925px;
    height: 34px;
    border-top: 1.500px solid #4a4c50;
    overflow: hidden;
    color: #fdebd9;
    font-size: 24px;
    -webkit-text-stroke: .4px;
`;

const Time = styled.div`
    position: relative;
    flex: 0 0 ${PITCH}px;
    text-align: center;
    line-height: 35px;
    left: -35px;
    &::before {
        content: '';
        position: absolute;
        left: calc(50% + 5px);
        top: 0;
        width: 1.300px;
        height: 5px;
        background: #fdebd9;
    }
`;
